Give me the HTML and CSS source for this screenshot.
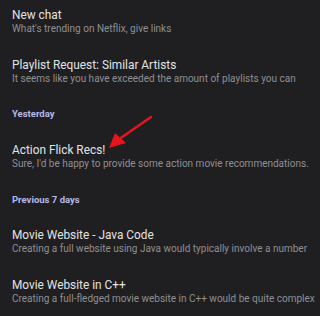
FILE: index.html
```html
<!DOCTYPE html>
<html>
<head>
<meta charset="utf-8">
<link rel="stylesheet" href="styles.css">
</head>
<body>
<div class="drawer">
  <ul class="chats">
    <li class="chat">
      <div class="chat-title">New chat</div>
      <div class="chat-preview">What's trending on Netflix, give links</div>
    </li>
    <li class="chat">
      <div class="chat-title">Playlist Request: Similar Artists</div>
      <div class="chat-preview">It seems like you have exceeded the amount of playlists you can</div>
    </li>
    <li class="group-label">Yesterday</li>
    <li class="chat">
      <div class="chat-title">Action Flick Recs!</div>
      <div class="chat-preview">Sure, I'd be happy to provide some action movie recommendations.</div>
    </li>
    <li class="group-label">Previous 7 days</li>
    <li class="chat">
      <div class="chat-title">Movie Website - Java Code</div>
      <div class="chat-preview">Creating a full website using Java would typically involve a number</div>
    </li>
    <li class="chat">
      <div class="chat-title">Movie Website in C++</div>
      <div class="chat-preview">Creating a full-fledged movie website in C++ would be quite complex</div>
    </li>
  </ul>
  <svg class="callout-arrow" width="60" height="45" viewBox="0 0 60 45">
    <line x1="52" y1="2" x2="16" y2="27" stroke="#e3161d" stroke-width="2.6" stroke-linecap="round"/>
    <polygon points="10,33 16,18 27,28" fill="#e3161d"/>
  </svg>
</div>
</body>
</html>
```

FILE: styles.css
```css
html, body {
  margin: 0;
  padding: 0;
  background: #1f1f21;
}

body {
  width: 320px;
  height: 316px;
  overflow: hidden;
  font-family: Roboto, "Noto Sans", sans-serif;
}

.drawer {
  position: relative;
}

.chats {
  list-style: none;
  margin: 0;
  padding: 0;
}

.chat {
  padding: 7.5px 12px 14.5px;
}

.chat-title {
  font-size: 11.85px;
  line-height: 14px;
  color: #e2e2e4;
  white-space: nowrap;
}

.chat-preview {
  font-size: 10px;
  line-height: 14px;
  color: #8f8f93;
  white-space: nowrap;
}

.group-label {
  padding: 7.45px 12px 14.05px;
  font-size: 9.5px;
  line-height: 14px;
  font-weight: 700;
  color: #b6b8e6;
}

.callout-arrow {
  position: absolute;
  left: 99px;
  top: 115px;
}
```
